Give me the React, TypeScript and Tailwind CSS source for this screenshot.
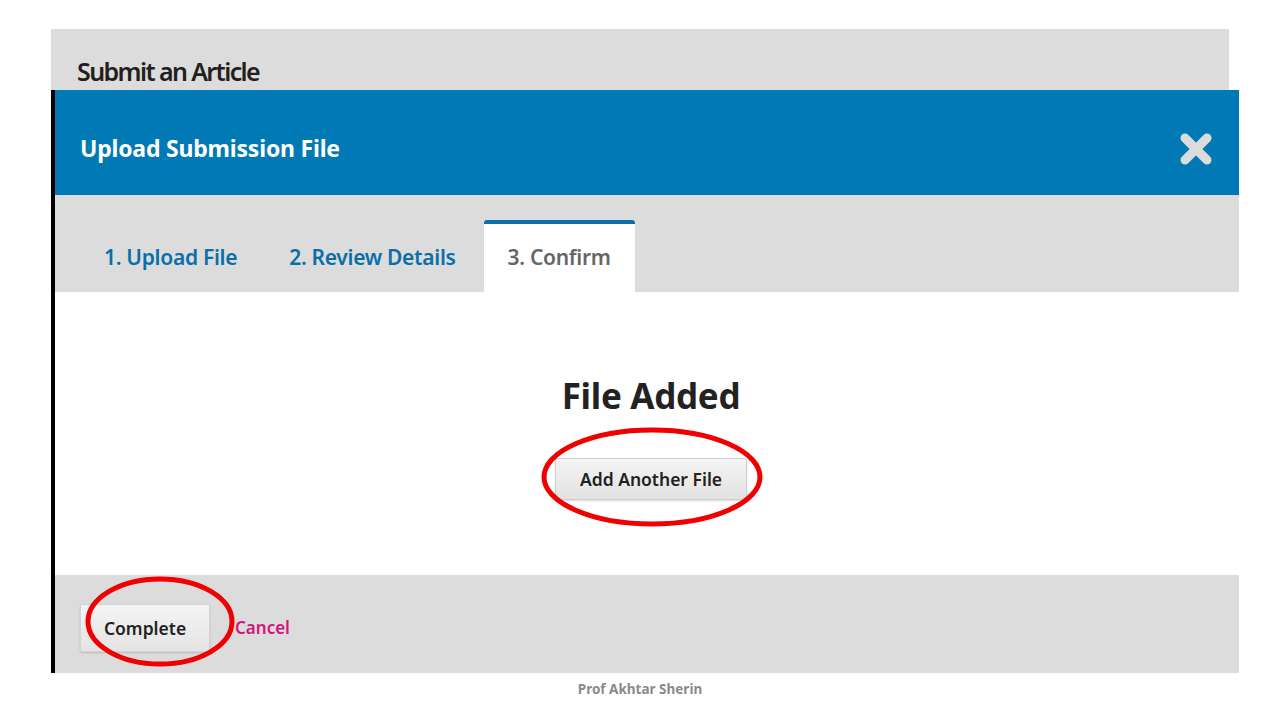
export default function App() {
  const font = { fontFamily: '"Noto Sans", "Open Sans", sans-serif' };

  return (
    <div className="relative h-[720px] w-[1280px] bg-white" style={font}>
      <div className="pl-[51px] pt-[29px]">
        {/* page heading strip */}
        <div className="h-[61px] w-[1178px] bg-[#dcdcdc] pl-[26px] pt-[28px]">
          <h1 className="text-[25px] leading-[28px] font-semibold tracking-[-1.6px] text-[#231f20]">
            Submit an Article
          </h1>
        </div>

        {/* modal */}
        <div className="w-[1188px] border-l-4 border-black">
          <div className="flex h-[105px] items-center justify-between bg-[#0079b4] pr-[26px] pl-[25px] pt-[12px]">
            <h2 className="text-[23px] font-bold tracking-[-0.2px] text-white">
              Upload Submission File
            </h2>
            <svg width="34" height="34" viewBox="0 0 34 34">
              <path
                d="M6 6 L28 28 M28 6 L6 28"
                stroke="#dcdcdc"
                strokeWidth="9"
                strokeLinecap="round"
              />
            </svg>
          </div>

          <div className="flex h-[97px] items-end gap-[4px] bg-[#dcdcdc] pl-[25px]">
            <div className="flex h-[72px] items-center px-6 pt-[3px] text-[21px] font-semibold tracking-[-0.3px] text-[#0a6fa8]">
              1. Upload File
            </div>
            <div className="flex h-[72px] items-center px-6 pt-[3px] text-[21px] font-semibold tracking-[-0.3px] text-[#0a6fa8]">
              2. Review Details
            </div>
            <div className="flex h-[72px] items-center rounded-t-[3px] border-t-4 border-[#0a6fa8] bg-white px-6 text-[21px] font-semibold tracking-[-0.3px] text-[#666]">
              3. Confirm
            </div>
          </div>

          <div className="flex h-[283px] flex-col items-center bg-white pt-[83px] pl-[8px]">
            <div className="text-[35px] leading-[42px] font-bold tracking-[-0.3px] text-[#222]">
              File Added
            </div>
            <button className="mt-[41px] h-[42px] w-[192px] rounded-[2px] border border-[#cfcfcf] bg-gradient-to-b from-[#f4f4f4] to-[#e2e2e2] text-[17.5px] font-semibold text-[#222] shadow-[0_1px_2px_rgba(0,0,0,0.15)]">
              Add Another File
            </button>
          </div>

          <div className="flex h-[98px] items-center gap-[25px] bg-[#dcdcdc] pl-[25px] pt-[8px]">
            <button className="h-[48px] w-[130px] rounded-[2px] border border-[#d4d4d4] bg-gradient-to-b from-[#f4f4f4] to-[#e4e4e4] text-[17.5px] font-semibold text-[#222] shadow-[0_1px_2px_rgba(0,0,0,0.15)]">
              Complete
            </button>
            <span className="text-[17px] font-semibold text-[#d1157a]">
              Cancel
            </span>
          </div>
        </div>
      </div>

      <div className="mt-[6px] text-center text-[13.5px] font-bold text-[#8a8a8a]">
        Prof Akhtar Sherin
      </div>

      {/* red annotation ellipses */}
      <svg
        className="pointer-events-none absolute top-0 left-0"
        width="1280"
        height="720"
      >
        <ellipse cx="652" cy="477" rx="108" ry="47" fill="none" stroke="#f00000" strokeWidth="5" />
        <ellipse cx="160" cy="621.5" rx="72" ry="42.5" fill="none" stroke="#f00000" strokeWidth="5" />
      </svg>
    </div>
  );
}
